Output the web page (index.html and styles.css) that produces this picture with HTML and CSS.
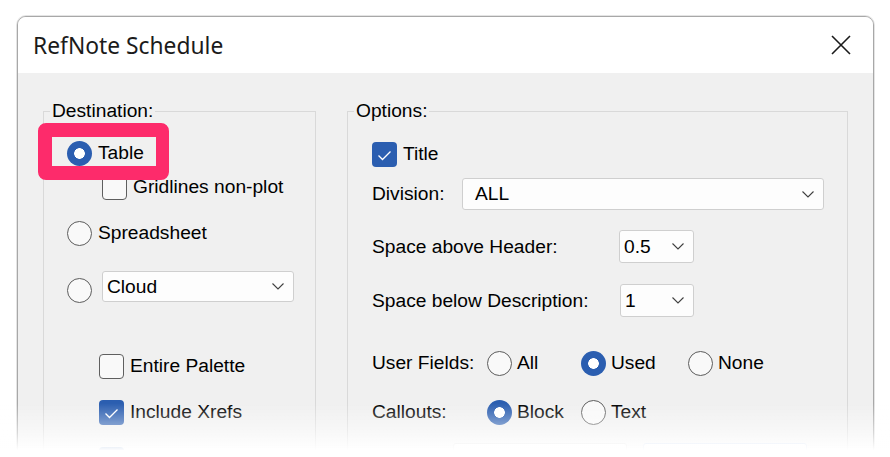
FILE: index.html
```html
<!DOCTYPE html>
<html>
<head>
<meta charset="utf-8">
<title>RefNote Schedule</title>
<link rel="stylesheet" href="styles.css">
</head>
<body>
<div class="dialog">
  <div class="titlebar">
    <span class="title">RefNote Schedule</span>
    <svg class="close" width="20" height="20" viewBox="0 0 20 20"><path d="M1 1 L19 19 M19 1 L1 19" stroke="#1a1a1a" stroke-width="1.6" fill="none"/></svg>
  </div>
  <div class="content">
    <fieldset class="group">
      <legend>Destination:</legend>
      <div class="inner">
        <div class="row r-table hl"><span class="radio on"></span><span>Table</span></div>
        <div class="row r-grid"><span class="cb"></span><span>Gridlines non-plot</span></div>
        <div class="row r-spread"><span class="radio"></span><span>Spreadsheet</span></div>
        <div class="row r-cloud"><span class="radio"></span><div class="select s-cloud"><span>Cloud</span><svg class="chev" width="12" height="7" viewBox="0 0 12 7"><polyline points="0.5,0.5 6,6 11.5,0.5" fill="none" stroke="#404040" stroke-width="1.1"/></svg></div></div>
        <div class="row r-ent"><span class="cb"></span><span>Entire Palette</span></div>
        <div class="row r-xref"><span class="cb on"><svg width="25" height="25" viewBox="0 0 25 25"><polyline points="6.5,13.5 10.5,17.5 18.5,9.5" fill="none" stroke="#fff" stroke-width="1.3"/></svg></span><span>Include Xrefs</span></div>
        <div class="row r-more"><span class="cb on"><svg width="25" height="25" viewBox="0 0 25 25"><polyline points="6.5,13.5 10.5,17.5 18.5,9.5" fill="none" stroke="#fff" stroke-width="1.3"/></svg></span></div>
      </div>
    </fieldset>
    <fieldset class="group">
      <legend>Options:</legend>
      <div class="inner opts">
        <div class="row o-title"><span class="cb on"><svg width="25" height="25" viewBox="0 0 25 25"><polyline points="6.5,13.5 10.5,17.5 18.5,9.5" fill="none" stroke="#fff" stroke-width="1.3"/></svg></span><span>Title</span></div>
        <div class="row field o-div"><span class="lbl l-div">Division:</span><div class="select s-div"><span>ALL</span><svg class="chev" width="12" height="7" viewBox="0 0 12 7"><polyline points="0.5,0.5 6,6 11.5,0.5" fill="none" stroke="#404040" stroke-width="1.1"/></svg></div></div>
        <div class="row field o-sah"><span class="lbl l-sah">Space above Header:</span><div class="select s-sm"><span>0.5</span><svg class="chev" width="12" height="7" viewBox="0 0 12 7"><polyline points="0.5,0.5 6,6 11.5,0.5" fill="none" stroke="#404040" stroke-width="1.1"/></svg></div></div>
        <div class="row field o-sbd"><span class="lbl l-sbd">Space below Description:</span><div class="select s-sm2"><span>1</span><svg class="chev" width="12" height="7" viewBox="0 0 12 7"><polyline points="0.5,0.5 6,6 11.5,0.5" fill="none" stroke="#404040" stroke-width="1.1"/></svg></div></div>
        <div class="choices o-uf">
          <span class="lbl">User Fields:</span>
          <span class="opt"><span class="radio"></span><span>All</span></span>
          <span class="opt"><span class="radio on"></span><span>Used</span></span>
          <span class="opt"><span class="radio"></span><span>None</span></span>
        </div>
        <div class="choices o-co">
          <span class="lbl">Callouts:</span>
          <span class="opt"><span class="radio on"></span><span>Block</span></span>
          <span class="opt"><span class="radio"></span><span>Text</span></span>
        </div>
        <div class="row o-bottom"><span class="spacer"></span><span class="box b1"></span><span class="box b2"></span></div>
      </div>
    </fieldset>
  </div>
</div>
<div class="fade"></div>
</body>
</html>
```
FILE: styles.css
```css
*, *::before, *::after { box-sizing: border-box; }
html, body { margin: 0; height: 100%; }
body {
  background: #fff;
  overflow: hidden;
  padding: 16px 0 0 17px;
  font-family: "Liberation Sans", Arial, sans-serif;
  font-size: 19.2px;
  color: #000;
}
.dialog {
  width: 857px;
  height: 480px;
  border: 1px solid #a8a8a8;
  border-radius: 9px 9px 0 0;
  box-shadow: 0 0 0 1px #e4e4e4;
  background: #f0f0f0;
  overflow: hidden;
}
.titlebar {
  height: 56px;
  background: #fff;
  display: flex;
  align-items: center;
  justify-content: space-between;
  padding: 1px 22px 0 15px;
}
.title {
  font-family: "Noto Sans", "Open Sans", sans-serif;
  font-size: 22.8px;
  color: #1b1b1b;
}
.close { display: block; margin-top: -1px; }
.content {
  display: grid;
  grid-template-columns: 273px 501px;
  column-gap: 31px;
  padding: 27px 0 0 25px;
}
fieldset.group {
  margin: 0;
  padding: 0;
  border: 1px solid #d9d9d9;
  min-width: 0;
  height: 420px;
}
legend {
  margin-left: 6px;
  padding: 0 2px;
  line-height: 22px;
}
.inner {
  padding-left: 23px;
  display: flex;
  flex-direction: column;
  align-items: flex-start;
}
.inner.opts { padding-left: 24px; }
.row {
  display: flex;
  align-items: center;
  gap: 6px;
  line-height: 22px;
}
.radio {
  width: 25px;
  height: 25px;
  border-radius: 50%;
  border: 1.5px solid #5c5c5c;
  background: #f9f9f9;
  flex: none;
}
.radio.on {
  border: none;
  background: radial-gradient(circle, #fff 0 5px, #2b5eb0 5.6px);
}
.cb {
  width: 25px;
  height: 25px;
  border: 1.5px solid #5f5f5f;
  border-radius: 4px;
  background: #f9f9f9;
  flex: none;
  display: flex;
}
.cb.on { background: #2b5eb0; border: none; }
.cb svg { display: block; }
.select {
  display: flex;
  align-items: center;
  justify-content: space-between;
  background: #fdfdfd;
  border: 1px solid #cfcfcf;
  border-radius: 3px;
  padding: 0 9px 0 4px;
  line-height: 22px;
}
.chev { display: block; flex: none; }

/* highlight */
.hl { position: relative; }
.hl::before {
  content: "";
  position: absolute;
  left: -29px;
  top: -15px;
  width: 131px;
  height: 57px;
  border: 14px solid #fd2b6b;
  border-right-width: 13px;
  border-radius: 8px;
  z-index: 2;
}

/* destination rows */
.r-table { margin-top: 16px; height: 30px; }
.r-grid { margin-top: 6px; height: 26px; margin-left: 35px; }
.r-spread { margin-top: 18px; height: 30px; }
.r-cloud { margin-top: 23px; height: 32px; align-items: flex-end; }
.s-cloud { margin-left: 4px; width: 192px; height: 31px; align-self: flex-start; }
.r-ent { margin-top: 50px; height: 26px; margin-left: 32px; }
.r-xref { margin-top: 20px; height: 26px; margin-left: 32px; }
.r-more { margin-top: 21px; height: 26px; margin-left: 32px; }

/* options rows */
.field { gap: 0; }
.o-title { margin-top: 19px; height: 26px; }
.o-div { margin-top: 11px; height: 32px; }
.l-div { width: 90px; }
.s-div { width: 362px; height: 32px; padding-left: 12px; }
.o-sah { margin-top: 20px; height: 33px; }
.l-sah { width: 247px; }
.s-sm { width: 75px; height: 33px; }
.o-sbd { margin-top: 21px; height: 33px; }
.l-sbd { width: 248px; }
.s-sm2 { width: 74px; height: 33px; }
.choices {
  display: grid;
  grid-template-columns: 115px 94px 107px auto;
  align-items: center;
  height: 30px;
  line-height: 22px;
}
.opt { display: flex; align-items: center; gap: 5px; }
.o-uf { margin-top: 31px; }
.o-co { margin-top: 19px; }
.o-bottom { margin-top: 16px; height: 32px; gap: 0; }
.spacer { width: 81px; }
.box {
  height: 32px;
  background: #fdfdfd;
  border: 1px solid #d4d4d4;
  border-radius: 3px;
}
.b1 { width: 174px; }
.b2 { width: 164px; margin-left: 16px; border-color: #bfd0ec; }

.fade {
  position: fixed;
  left: 0;
  right: 0;
  bottom: 0;
  height: 54px;
  background: linear-gradient(to bottom, rgba(255,255,255,0) 0%, rgba(255,255,255,0.55) 55%, #fff 88%);
  z-index: 5;
}
```
